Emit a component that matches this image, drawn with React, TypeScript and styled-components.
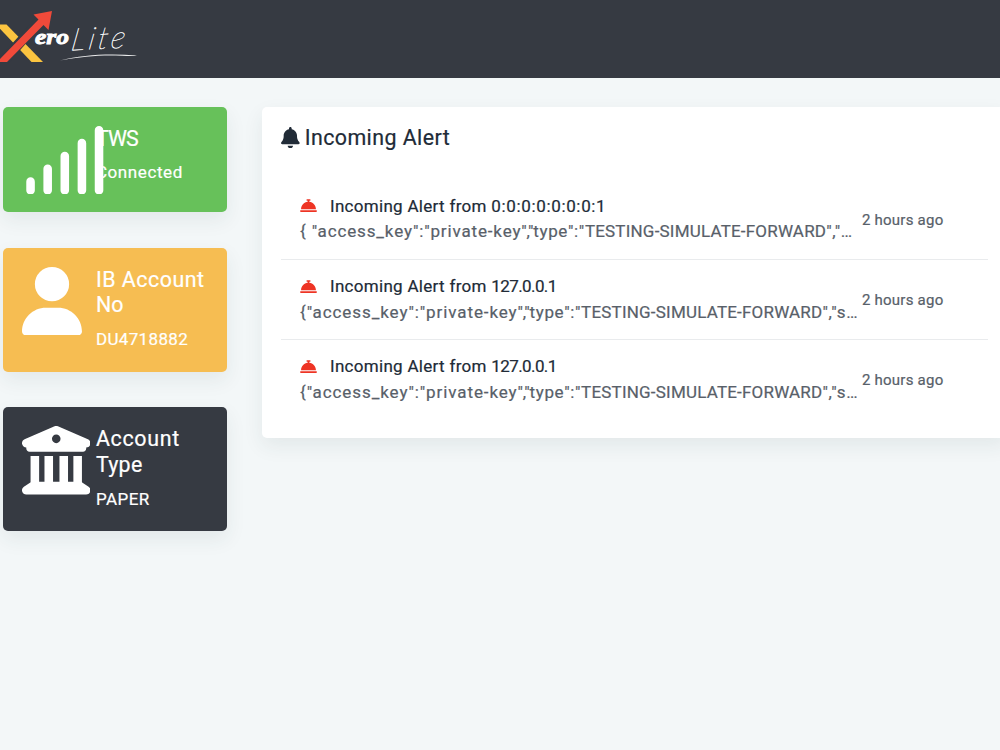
import React from "react";
import styled, { createGlobalStyle } from "styled-components";
import { FaBell, FaBellConcierge, FaBuildingColumns, FaSignal, FaUser } from "react-icons/fa6";

const GlobalStyle = createGlobalStyle`
  *, *::before, *::after { box-sizing: border-box; }
  body {
    margin: 0;
    background: #f3f7f8;
    color: #212b37;
    font-family: Roboto, "Liberation Sans", sans-serif;
    font-size: 17px;
    -webkit-text-stroke: 0.2px currentColor;
    overflow: hidden;
  }
  h2, h3, p, ul { margin: 0; padding: 0; font-weight: 400; }
  svg { display: block; flex: none; }
`;

const Page = styled.div`
  width: 1000px;
  height: 750px;
  overflow: hidden;
`;

const TopBar = styled.header`
  height: 78px;
  background: #363a42;
`;

const Content = styled.main`
  display: flex;
  align-items: flex-start;
  gap: 34.6px;
  padding: 28.6px 0 0 2.6px;
`;

const Sidebar = styled.aside`
  display: flex;
  flex-direction: column;
  flex: none;
  gap: 35.8px;
  width: 224.8px;
`;

const StatCard = styled.section<{ $color: string; $height: number }>`
  display: flex;
  height: ${(p) => p.$height}px;
  padding: 19px;
  border-radius: 5px;
  background: ${(p) => p.$color};
  color: #fff;
  box-shadow: 0 8px 20px rgba(40, 60, 70, 0.08);
`;

const StatIcon = styled.div<{ $width: number }>`
  position: relative;
  z-index: 1;
  flex: none;
  width: 74.3px;
  svg {
    width: ${(p) => p.$width}px;
    height: 68.5px;
  }
`;

const StatText = styled.div`
  flex: 1;
  white-space: nowrap;
`;

const StatTitle = styled.h3<{ $spacing: number }>`
  font-size: 21.4px;
  line-height: 25.7px;
  letter-spacing: ${(p) => p.$spacing}px;
`;

const StatValue = styled.p<{ $spacing: number }>`
  margin-top: 8.2px;
  font-size: 17px;
  line-height: 26px;
  letter-spacing: ${(p) => p.$spacing}px;
`;

const Panel = styled.section`
  flex: none;
  width: 745px;
  height: 331.5px;
  padding: 19px;
  border-radius: 5px;
  background: #fff;
  box-shadow: 0 8px 20px rgba(40, 60, 70, 0.08);
`;

const PanelTitle = styled.h2`
  display: flex;
  gap: 5px;
  align-items: center;
  height: 24px;
  font-size: 21.4px;
  letter-spacing: 0.43px;
  svg { width: 18.7px; }
`;

const AlertList = styled.ul`
  width: 707px;
  margin-top: 29.4px;
  list-style: none;
`;

const AlertItem = styled.li`
  display: flex;
  align-items: center;
  height: 80px;
  padding: 1.2px 19px 0;
  & + & { border-top: 1px solid #e9ebed; }
`;

const AlertBody = styled.div`
  flex: none;
  width: 562px;
  padding-bottom: 2px;
  white-space: nowrap;
`;

const AlertHeading = styled.div`
  display: flex;
  align-items: center;
  height: 25px;
  svg {
    margin: 0 13px 0 0;
    color: #ee3424;
  }
`;

const AlertMessage = styled.p`
  height: 26px;
  line-height: 26px;
  color: #586069;
`;

const Tracked = styled.span<{ $spacing: number }>`
  letter-spacing: ${(p) => p.$spacing}px;
`;

const AlertTime = styled.span`
  color: #586069;
  font-size: 15px;
  letter-spacing: 0.23px;
  white-space: nowrap;
`;

const Logo = () => (
  <svg width="140" height="78" viewBox="0 0 140 78" role="img" aria-label="XeroLite">
    <path d="M-4 24.5H6.5L43 62H31.500Z" fill="#fbc440" />
    <path d="M-3 62.500L36 19.500L41 24.500L7 62.500Z" fill="#363a42" stroke="#363a42" strokeWidth="3" />
    <path d="M-3 62L38.500 19.500L33.500 14.500L52 11L48.500 30L43.500 25L7 62Z" fill="#f04a3a" />
    <text x="35" y="44" fill="#fff" stroke="#fff" strokeWidth="0.9" fontFamily="Liberation Serif, serif" fontStyle="italic" fontWeight="700" fontSize="22" textLength="34" lengthAdjust="spacingAndGlyphs">ero</text>
    <text transform="translate(70 50.5) rotate(-3) skewX(-12)" fill="#fff" stroke="#fff" strokeWidth="0.4" fontFamily="Lato, sans-serif" fontStyle="italic" fontWeight="100" fontSize="31" textLength="54" lengthAdjust="spacing">Lite</text>
    <path d="M60 60.500C84 54.300 110 53.500 137 55.500C134 56.300 128 56 122 55.800C100 54.800 84 56.500 60 60.500Z" fill="#fff" fillOpacity="0.9" />
  </svg>
);

const stats = [
  { icon: <FaSignal />, iconWidth: 85.6, color: "#67c15a", height: 105.2, lines: [{ text: "TWS", spacing: -0.9 }], value: "Connected", spacing: 0.6 },
  { icon: <FaUser />, iconWidth: 60, color: "#f6bd52", height: 124, lines: [{ text: "IB Account", spacing: 0.5 }, { text: "No", spacing: 0 }], value: "DU4718882", spacing: 0.36 },
  { icon: <FaBuildingColumns />, iconWidth: 68.5, color: "#363a42", height: 124, lines: [{ text: "Account", spacing: 0.7 }, { text: "Type", spacing: 0.3 }], value: "PAPER", spacing: 0.45 },
];

const alerts = [
  { from: "0:0:0:0:0:0:0:1", fromSpacing: 0.65, open: '{ "access_key":"private-key', openSpacing: 0.86, tail: '","…', tailSpacing: 0.6 },
  { from: "127.0.0.1", fromSpacing: -0.6, open: '{"access_key":"private-key', openSpacing: 0.91, tail: '","s…', tailSpacing: 0.7 },
  { from: "127.0.0.1", fromSpacing: -0.6, open: '{"access_key":"private-key', openSpacing: 0.91, tail: '","s…', tailSpacing: 0.7 },
];

export default function App() {
  return (
    <Page>
      <GlobalStyle />
      <TopBar>
        <Logo />
      </TopBar>
      <Content>
        <Sidebar>
          {stats.map((s) => (
            <StatCard key={s.value} $color={s.color} $height={s.height}>
              <StatIcon $width={s.iconWidth}>{s.icon}</StatIcon>
              <StatText>
                {s.lines.map((line) => (
                  <StatTitle key={line.text} $spacing={line.spacing}>{line.text}</StatTitle>
                ))}
                <StatValue $spacing={s.spacing}>{s.value}</StatValue>
              </StatText>
            </StatCard>
          ))}
        </Sidebar>
        <Panel>
          <PanelTitle>
            <FaBell />
            Incoming Alert
          </PanelTitle>
          <AlertList>
            {alerts.map((a, i) => (
              <AlertItem key={i}>
                <AlertBody>
                  <AlertHeading>
                    <FaBellConcierge />
                    <div>
                      <Tracked $spacing={0.3}>Incoming Alert from </Tracked>
                      <Tracked $spacing={a.fromSpacing}>{a.from}</Tracked>
                    </div>
                  </AlertHeading>
                  <AlertMessage>
                    <Tracked $spacing={a.openSpacing}>{a.open}</Tracked>
                    <Tracked $spacing={-0.3}>{'","'}</Tracked>
                    <Tracked $spacing={0.65}>{'type":"'}</Tracked>
                    <Tracked $spacing={0.2}>TESTING-SIMULATE-FORWARD</Tracked>
                    <Tracked $spacing={a.tailSpacing}>{a.tail}</Tracked>
                  </AlertMessage>
                </AlertBody>
                <AlertTime>2 hours ago</AlertTime>
              </AlertItem>
            ))}
          </AlertList>
        </Panel>
      </Content>
    </Page>
  );
}
